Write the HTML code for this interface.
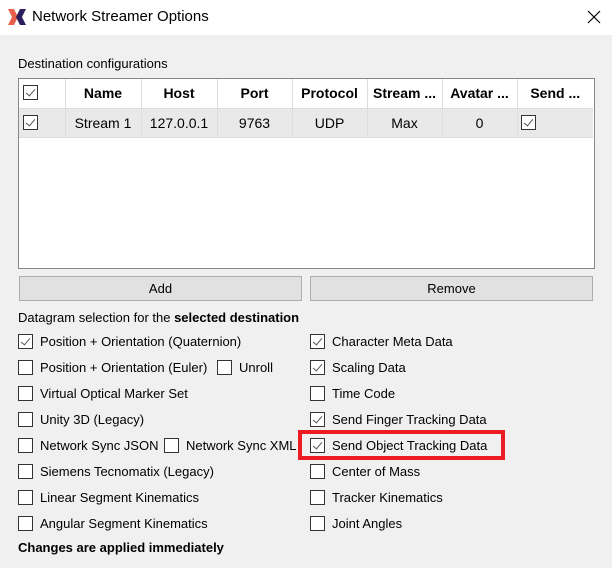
<!DOCTYPE html>
<html><head><meta charset="utf-8"><style>
*{margin:0;padding:0;box-sizing:border-box}
body{width:612px;height:568px;background:#f0f0f0;font-family:"Liberation Sans",sans-serif;color:#000;position:relative;overflow:hidden}
.abs{position:absolute}
.title{left:0;top:0;width:612px;height:35px;background:#fff}
.lbl{font-size:13px;white-space:nowrap;line-height:15px}
.cb{position:absolute;width:15px;height:15px;border:1px solid #333;background:#fff}
.cb.c::after{content:"";position:absolute;left:4px;top:1px;width:4px;height:8px;border-right:1px solid #555;border-bottom:1px solid #555;transform:rotate(40deg)}
table{border-collapse:collapse;font-size:14px}
td{border-right:1px solid #ddd;text-align:center;padding:0;white-space:nowrap}
.btn{position:absolute;height:25px;background:#e1e1e1;border:1px solid #adadad;font-size:13px;text-align:center;line-height:23px}
</style></head><body>
<div class="abs title"></div>
<svg class="abs" style="left:7px;top:8px" width="20" height="18" viewBox="0 0 20 18">
<path d="M1 1 L7 1 L11 9 L7 17 L1 17 L5 9 Z" fill="#e8604c"/>
<path d="M19 1 L13 1 L9 9 L13 17 L19 17 L15 9 Z" fill="#2a1e5c"/>
</svg>
<div class="abs" style="left:32px;top:8px;font-size:15px;color:#000">Network Streamer Options</div>
<svg class="abs" style="left:587px;top:10px" width="14" height="14"><path d="M1 1L13 13M13 1L1 13" stroke="#000" stroke-width="1.2"/></svg>

<div class="abs lbl" style="left:18px;top:56px">Destination configurations</div>
<div class="abs" style="left:18px;top:78px;width:577px;height:191px;background:#fff;border:1px solid #888"></div>
<table class="abs" style="left:19px;top:79px">
<tr style="height:29px;font-weight:bold;border-bottom:1px solid #ddd">
<td style="width:46px;position:relative"><div class="cb c" style="left:4px;top:6px"></div></td>
<td style="width:76px">Name</td><td style="width:76px">Host</td><td style="width:75px">Port</td>
<td style="width:75px">Protocol</td><td style="width:75px">Stream ...</td><td style="width:75px">Avatar ...</td><td style="width:76px;border-right:none">Send ...</td></tr>
<tr style="height:29px;background:#e9e9e9;border-bottom:1px solid #ddd">
<td style="position:relative"><div class="cb c" style="left:4px;top:6px"></div></td>
<td>Stream 1</td><td>127.0.0.1</td><td>9763</td><td>UDP</td><td>Max</td><td>0</td>
<td style="position:relative;border-right:none"><div class="cb c" style="left:3px;top:6px"></div></td></tr>
</table>

<div class="btn" style="left:19px;top:276px;width:283px">Add</div>
<div class="btn" style="left:310px;top:276px;width:283px">Remove</div>

<div class="abs lbl" style="left:18px;top:310px">Datagram selection for the <b>selected destination</b></div>

<div class="cb c" style="left:18px;top:334px"></div><div class="abs lbl" style="left:40px;top:334px">Position + Orientation (Quaternion)</div>
<div class="cb" style="left:18px;top:360px"></div><div class="abs lbl" style="left:40px;top:360px">Position + Orientation (Euler)</div>
<div class="cb" style="left:217px;top:360px"></div><div class="abs lbl" style="left:239px;top:360px">Unroll</div>
<div class="cb" style="left:18px;top:386px"></div><div class="abs lbl" style="left:40px;top:386px">Virtual Optical Marker Set</div>
<div class="cb" style="left:18px;top:412px"></div><div class="abs lbl" style="left:40px;top:412px">Unity 3D (Legacy)</div>
<div class="cb" style="left:18px;top:438px"></div><div class="abs lbl" style="left:40px;top:438px">Network Sync JSON</div>
<div class="cb" style="left:164px;top:438px"></div><div class="abs lbl" style="left:186px;top:438px">Network Sync XML</div>
<div class="cb" style="left:18px;top:464px"></div><div class="abs lbl" style="left:40px;top:464px">Siemens Tecnomatix (Legacy)</div>
<div class="cb" style="left:18px;top:490px"></div><div class="abs lbl" style="left:40px;top:490px">Linear Segment Kinematics</div>
<div class="cb" style="left:18px;top:516px"></div><div class="abs lbl" style="left:40px;top:516px">Angular Segment Kinematics</div>

<div class="cb c" style="left:310px;top:334px"></div><div class="abs lbl" style="left:332px;top:334px">Character Meta Data</div>
<div class="cb c" style="left:310px;top:360px"></div><div class="abs lbl" style="left:332px;top:360px">Scaling Data</div>
<div class="cb" style="left:310px;top:386px"></div><div class="abs lbl" style="left:332px;top:386px">Time Code</div>
<div class="cb c" style="left:310px;top:412px"></div><div class="abs lbl" style="left:332px;top:412px">Send Finger Tracking Data</div>
<div class="cb c" style="left:310px;top:438px"></div><div class="abs lbl" style="left:332px;top:438px">Send Object Tracking Data</div>
<div class="cb" style="left:310px;top:464px"></div><div class="abs lbl" style="left:332px;top:464px">Center of Mass</div>
<div class="cb" style="left:310px;top:490px"></div><div class="abs lbl" style="left:332px;top:490px">Tracker Kinematics</div>
<div class="cb" style="left:310px;top:516px"></div><div class="abs lbl" style="left:332px;top:516px">Joint Angles</div>

<div class="abs" style="left:298px;top:430px;width:207px;height:30px;border:4px solid #ec1c24"></div>

<div class="abs lbl" style="left:18px;top:540px;font-weight:bold">Changes are applied immediately</div>
</body></html>
